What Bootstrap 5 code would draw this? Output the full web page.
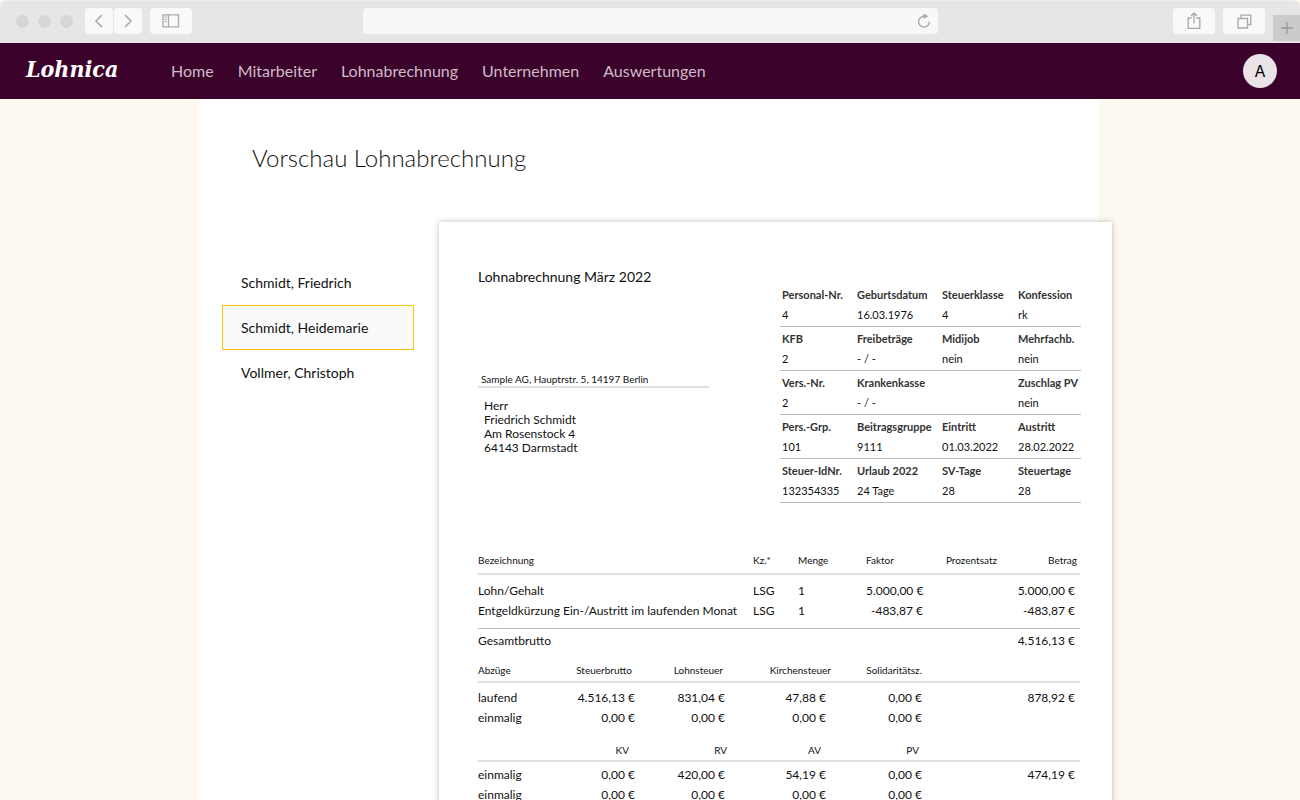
<!DOCTYPE html>
<html lang="de">
<head>
<meta charset="utf-8">
<meta name="viewport" content="width=device-width, initial-scale=1">
<title>Lohnica – Vorschau Lohnabrechnung</title>
<link href="https://cdn.jsdelivr.net/npm/bootstrap@5.3.0/dist/css/bootstrap.min.css" rel="stylesheet">
<style>
  body { font-family: Lato, "Liberation Sans", sans-serif; color: #111; background: #fdf9f0; text-rendering: optimizeLegibility; }
  a { color: inherit; text-decoration: none; }

  /* browser frame */
  .chrome-bar { display: grid; grid-template-columns: 1fr minmax(0, 575px) 1fr; height: 43px; background: #e6e6e6; border-top: 1px solid #f0efe6; border-radius: 6px 6px 0 0; padding-bottom: 2px; }
  .dots { gap: 9px; margin-right: 12px; }
  .dot { width: 13px; height: 13px; border-radius: 50%; background: #d6d6d6; }
  .tool-btn { height: 26px; width: 42px; padding: 0; border: 0; border-radius: 4px; background: #f9f9f9; color: #a9a9a9; display: flex; align-items: center; justify-content: center; }
  .history { gap: 1px; }
  .history .tool-btn { width: 28px; }
  .tool-btn.tab-add { width: 27px; height: 26px; border-radius: 0; background: #cbcbcb; color: #999; margin-top: 14px; }
  .address { height: 26px; border: 0; border-radius: 4px; background: #f8f8f8; padding: 0 32px 0 12px; width: 100%; font-size: 12px; }
  .tool-btn.reload { right: 6px; top: 0; width: 16px; background: none; }
  svg { fill: none; stroke: currentColor; }

  /* application bar */
  .app-bar { background: #3b022b; height: 56px; padding: 0 23px 0 26px; }
  .logo { font-family: "DejaVu Serif Condensed", "DejaVu Serif", serif; font-weight: 700; font-style: italic; font-size: 23px; line-height: 28px; color: #fff; width: 133px; padding: 0; margin: 0 0 4px; }
  .app-bar .navbar-nav .nav-link { font-size: 16px; line-height: 24px; padding: 0 12px; color: #cdbcc8; }
  .avatar { width: 34px; height: 34px; border: 0; border-radius: 50%; background: #eae3e8; color: #000; font: 16px/34px Inter, sans-serif; padding: 0; }

  /* page */
  .scroller { overflow-y: auto; scrollbar-width: none; padding-right: 2px; }
  .scroller::-webkit-scrollbar { display: none; }
  .page { max-width: 900px; background: #fff; min-height: 100%; }
  h1 { font-size: 24px; line-height: 32px; font-weight: 300; padding: 43px 53px 0; margin: 0 0 48px; }
  .people { width: 192px; margin: 38px 25px 0 23px; }
  .people .list-group-item { font-size: 14px; line-height: 21px; padding: 11px 18px; border: 1px solid transparent; background: none; color: #111; }
  .people .list-group-item.active { background: #fafafa; border-color: #ffc400; margin: 0; }

  /* payslip */
  .sheet { background: #fff; box-shadow: 0 0 6px rgba(0, 0, 0, .25); margin-right: -13px; padding: 45px 32px 40px 39px; min-width: 0; }
  h2 { font-size: 14px; line-height: 20px; font-weight: 400; margin: 0 0 85px; }
  .sender { font-size: 10px; line-height: 14px; padding: 0 3px; border-bottom: 2px solid #e0e0e0; width: 231px; margin-bottom: 11px; }
  address { font-size: 12px; line-height: 14px; padding-left: 6px; margin: 0; }
  .facts { display: grid; grid-template-columns: 75fr 85fr 76fr 65fr; width: 301px; margin: 16px -1px 0 0; font-size: 11px; line-height: 20px; }
  .facts > div { padding: 2px 0 1px 2px; border-bottom: 1px solid #bbb; white-space: nowrap; min-width: 0; }
  .facts dt { font-weight: 700; color: #333; height: 20px; }
  .facts dd { margin: 0; height: 20px; }

  .sums { table-layout: fixed; border-collapse: separate; border-spacing: 0; margin: 0; color: #111; font-size: 12px; line-height: 20px; white-space: nowrap; }
  .sums > :not(caption) > * > * { padding: 0; border: 0; text-align: right; background: none; }
  .sums > :not(caption) > * > :first-child { text-align: left; }
  .sums > thead > tr > th { font-size: 10px; font-weight: 400; border-bottom: 2px solid #e0e0e0; }
  .sums > * > tr > :last-child { padding-right: 5px; }

  .earnings { margin-top: 47px; }
  .earnings > thead > tr > th { padding-bottom: 3px; }
  .earnings > thead > tr > :nth-child(5) { padding-right: 1px; }
  .earnings > thead > tr > :last-child { padding-right: 3px; }
  .earnings > thead > tr > :nth-child(-n+4), .earnings > tbody > tr > :nth-child(-n+3) { text-align: left; }
  .earnings > tbody > :first-child > td { padding-top: 6px; }
  .earnings > tbody > :last-child > td { padding-bottom: 7px; }
  .earnings > tfoot > tr > td { border-top: 1px solid #bbb; padding-top: 2px; }

  .deductions > * > tr > :nth-child(2), .deductions > * > tr > :nth-child(5) { padding-right: 1px; }
  .deductions > tbody > tr > :nth-child(3) { padding-right: 2px; }
  .deductions > tbody > tr > :nth-child(4) { padding-right: 5px; }
  .taxes { margin-top: 9px; }
  .taxes > thead > tr > th { padding-bottom: 1px; }
  .taxes > thead > tr > :nth-child(2), .taxes > thead > tr > :nth-child(3) { padding-right: 4px; }
  .taxes > tbody > :first-child > td { padding-top: 5px; }
  .insurance { margin-top: 12px; }
  .insurance > thead > tr > :nth-child(2) { padding-right: 7px; }
  .insurance > thead > tr > :nth-child(4) { padding-right: 10px; }
  .insurance > thead > tr > :nth-child(5) { padding-right: 4px; }
  .insurance > tbody > :first-child > td { padding-top: 3px; }
</style>
</head>
<body>
<div class="d-flex flex-column vh-100">
  <div class="chrome-bar align-items-center flex-shrink-0">
    <div class="d-flex align-items-center ps-3">
      <div class="dots d-flex"><span class="dot"></span><span class="dot"></span><span class="dot"></span></div>
      <div class="d-flex gap-2">
        <div class="history d-flex">
          <button class="tool-btn" aria-label="Zurück"><svg width="12" height="14" viewBox="0 0 12 14" stroke-width="1.6"><path d="M9 1 3 7l6 6"/></svg></button>
          <button class="tool-btn" aria-label="Vor"><svg width="12" height="14" viewBox="0 0 12 14" stroke-width="1.6"><path d="m3 1 6 6-6 6"/></svg></button>
        </div>
        <button class="tool-btn" aria-label="Seitenleiste"><svg width="18" height="14" viewBox="0 0 18 14"><path d="M1 .8h15.500v12H1zM6.500 1v12" stroke-width="1.3"/><path d="M2.500 3h2.500M2.500 5.300h2.500M2.500 7.600h2.500" stroke-width="1"/></svg></button>
      </div>
    </div>
    <div class="position-relative">
      <input class="address d-block" type="text" aria-label="Adresse">
      <button class="tool-btn reload position-absolute" aria-label="Neu laden"><svg width="14" height="16" viewBox="0 0 14 16"><path d="M7 3.300a5.400 5.400 0 1 0 5.400 5.400" stroke-width="1.4"/><path d="M6.500.500v5.500l5-2.700z" fill="currentColor" stroke="none"/></svg></button>
    </div>
    <div class="d-flex align-items-center justify-content-end">
      <button class="tool-btn me-2" aria-label="Teilen"><svg width="14" height="18" viewBox="0 0 14 18" stroke-width="1.3"><path d="M4.500 6H1.200v10.300h11.600V6H9.500M7 11.500V1.300M4 4l3-3 3 3"/></svg></button>
      <button class="tool-btn me-2" aria-label="Tabs"><svg width="15" height="15" viewBox="0 0 15 15" stroke-width="1.3"><path d="M1 4.500h9.500V14H1zM4 4.500V1.200h9.800V10.500h-3.300"/></svg></button>
      <button class="tool-btn tab-add" aria-label="Neuer Tab"><svg width="14" height="14" viewBox="0 0 14 14" stroke-width="1.3"><path d="M7 1v12M1 7h12"/></svg></button>
    </div>
  </div>

  <nav class="app-bar navbar navbar-expand flex-nowrap flex-shrink-0">
    <a class="logo navbar-brand" href="#">Lohnica</a>
    <ul class="navbar-nav me-auto">
      <li class="nav-item"><a class="nav-link" href="#">Home</a></li>
      <li class="nav-item"><a class="nav-link" href="#">Mitarbeiter</a></li>
      <li class="nav-item"><a class="nav-link" href="#">Lohnabrechnung</a></li>
      <li class="nav-item"><a class="nav-link" href="#">Unternehmen</a></li>
      <li class="nav-item"><a class="nav-link" href="#">Auswertungen</a></li>
    </ul>
    <button class="avatar" aria-label="Konto A">A</button>
  </nav>

  <div class="scroller flex-grow-1">
    <main class="page mx-auto">
      <h1>Vorschau Lohnabrechnung</h1>
      <div class="d-flex align-items-start">
        <div class="people list-group rounded-0 flex-shrink-0">
          <a class="list-group-item" href="#">Schmidt, Friedrich</a>
          <a class="list-group-item active" aria-current="true" href="#">Schmidt, Heidemarie</a>
          <a class="list-group-item" href="#">Vollmer, Christoph</a>
        </div>
        <article class="sheet flex-grow-1">
          <div class="d-flex justify-content-between">
            <div>
              <h2>Lohnabrechnung März 2022</h2>
              <div class="sender">Sample AG, Hauptrstr. 5, 14197 Berlin</div>
              <address>Herr<br>Friedrich Schmidt<br>Am Rosenstock 4<br>64143 Darmstadt</address>
            </div>
            <dl class="facts">
              <div><dt>Personal-Nr.</dt><dd>4</dd></div>
              <div><dt>Geburtsdatum</dt><dd>16.03.1976</dd></div>
              <div><dt>Steuerklasse</dt><dd>4</dd></div>
              <div><dt>Konfession</dt><dd>rk</dd></div>
              <div><dt>KFB</dt><dd>2</dd></div>
              <div><dt>Freibeträge</dt><dd>- / -</dd></div>
              <div><dt>Midijob</dt><dd>nein</dd></div>
              <div><dt>Mehrfachb.</dt><dd>nein</dd></div>
              <div><dt>Vers.-Nr.</dt><dd>2</dd></div>
              <div><dt>Krankenkasse</dt><dd>- / -</dd></div>
              <div></div>
              <div><dt>Zuschlag PV</dt><dd>nein</dd></div>
              <div><dt>Pers.-Grp.</dt><dd>101</dd></div>
              <div><dt>Beitragsgruppe</dt><dd>9111</dd></div>
              <div><dt>Eintritt</dt><dd>01.03.2022</dd></div>
              <div><dt>Austritt</dt><dd>28.02.2022</dd></div>
              <div><dt>Steuer-IdNr.</dt><dd>132354335</dd></div>
              <div><dt>Urlaub 2022</dt><dd>24 Tage</dd></div>
              <div><dt>SV-Tage</dt><dd>28</dd></div>
              <div><dt>Steuertage</dt><dd>28</dd></div>
            </dl>
          </div>

          <table class="table sums earnings">
            <colgroup><col width="275"><col width="45"><col width="68"><col width="57"><col width="75"><col width="82"></colgroup>
            <thead><tr><th>Bezeichnung</th><th>Kz.*</th><th>Menge</th><th>Faktor</th><th>Prozentsatz</th><th>Betrag</th></tr></thead>
            <tbody>
              <tr><td>Lohn/Gehalt</td><td>LSG</td><td>1</td><td>5.000,00 €</td><td></td><td>5.000,00 €</td></tr>
              <tr><td>Entgeldkürzung Ein-/Austritt im laufenden Monat</td><td>LSG</td><td>1</td><td>-483,87 €</td><td></td><td>-483,87 €</td></tr>
            </tbody>
            <tfoot><tr><td colspan="5">Gesamtbrutto</td><td>4.516,13 €</td></tr></tfoot>
          </table>

          <table class="table sums deductions taxes">
            <colgroup><col width="70"><col width="88"><col width="91"><col width="104"><col width="92"><col width="157"></colgroup>
            <thead><tr><th>Abzüge</th><th>Steuerbrutto</th><th>Lohnsteuer</th><th>Kirchensteuer</th><th>Solidaritätsz.</th><th></th></tr></thead>
            <tbody>
              <tr><td>laufend</td><td>4.516,13 €</td><td>831,04 €</td><td>47,88 €</td><td>0,00 €</td><td>878,92 €</td></tr>
              <tr><td>einmalig</td><td>0,00 €</td><td>0,00 €</td><td>0,00 €</td><td>0,00 €</td><td></td></tr>
            </tbody>
          </table>

          <table class="table sums deductions insurance">
            <colgroup><col width="70"><col width="88"><col width="91"><col width="104"><col width="92"><col width="157"></colgroup>
            <thead><tr><th></th><th>KV</th><th>RV</th><th>AV</th><th>PV</th><th></th></tr></thead>
            <tbody>
              <tr><td>einmalig</td><td>0,00 €</td><td>420,00 €</td><td>54,19 €</td><td>0,00 €</td><td>474,19 €</td></tr>
              <tr><td>einmalig</td><td>0,00 €</td><td>0,00 €</td><td>0,00 €</td><td>0,00 €</td><td></td></tr>
            </tbody>
          </table>
        </article>
      </div>
    </main>
  </div>
</div>
<script src="https://cdn.jsdelivr.net/npm/bootstrap@5.3.0/dist/js/bootstrap.bundle.min.js"></script>
</body>
</html>
